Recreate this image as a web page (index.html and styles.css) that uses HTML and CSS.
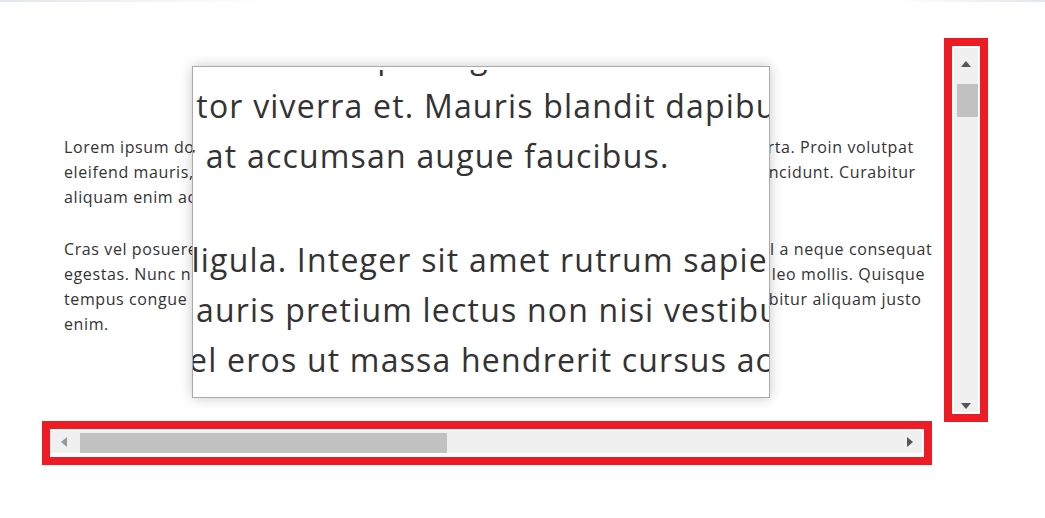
FILE: index.html
```html
<!DOCTYPE html>
<html lang="en">
<head>
    <meta charset="UTF-8">
    <title>Magnifier with custom scrollbars</title>
    <link rel="stylesheet" href="styles.css">
</head>
<body>
    <div class="topline"></div>

    <div class="page">
        <div class="row">
            <div class="text-pane">
                <div class="text">
                    <p>Lorem ipsum dolor sit amet, consectetuer adipiscing elit. Nunc vel metus at mollis et porta. Proin volutpat eleifend mauris, finibus non porttitor viverra et. Mauris blandit dapibus, a lacinia nibh tincidunt. Curabitur aliquam enim ac et lorem pulvinar at accumsan augue faucibus.</p>
                    <p>Cras vel posuere dui, a commodo ligula. Integer sit amet rutrum sapien. Fusce eu nisl vel a neque consequat egestas. Nunc nec ultrices nibh, mauris pretium lectus non nisi vestibulum, eget laoreet leo mollis. Quisque tempus congue erat, sed finibus vel eros ut massa hendrerit cursus accumsan nisl. Curabitur aliquam justo enim.</p>
                </div>
            </div>

            <!-- vertical scrollbar -->
            <div class="vscroll">
                <div class="track">
                    <span class="arrow up"></span>
                    <span class="thumb"></span>
                    <span class="arrow down"></span>
                </div>
            </div>
        </div>

        <!-- horizontal scrollbar -->
        <div class="hscroll">
            <div class="track">
                <span class="arrow left"></span>
                <span class="thumb"></span>
                <span class="arrow right"></span>
            </div>
        </div>
    </div>

    <!-- magnifier lens: same text, scaled 2x -->
    <div class="magnifier">
        <div class="text magnified">
            <p>Lorem ipsum dolor sit amet, consectetuer adipiscing elit. Nunc vel metus at mollis et porta. Proin volutpat eleifend mauris, finibus non porttitor viverra et. Mauris blandit dapibus, a lacinia nibh tincidunt. Curabitur aliquam enim ac et lorem pulvinar at accumsan augue faucibus.</p>
            <p>Cras vel posuere dui, a commodo ligula. Integer sit amet rutrum sapien. Fusce eu nisl vel a neque consequat egestas. Nunc nec ultrices nibh, mauris pretium lectus non nisi vestibulum, eget laoreet leo mollis. Quisque tempus congue erat, sed finibus vel eros ut massa hendrerit cursus accumsan nisl. Curabitur aliquam justo enim.</p>
        </div>
    </div>
</body>
</html>
```

FILE: styles.css
```css
body {
    margin: 0;
    background: #fff;
    font-family: "Open Sans", "Liberation Sans", sans-serif;
    color: #333;
}
.topline {
    height: 2px;
    background:
        linear-gradient(to right, #e1e6ec, rgba(225,230,236,0) 270px),
        linear-gradient(to left, #e1e6ec, rgba(225,230,236,0) 150px);
}
.page {
    padding: 36px 0 0 42px;
}
.row {
    display: flex;
    gap: 12px;
    height: 384px;
}
.text-pane {
    width: 890px;
    padding: 97px 0 0 22px;
    box-sizing: border-box;
}
.text {
    width: 880px;
    font-size: 16px;
    line-height: 25px;
    letter-spacing: 0.6px;
}
.text p {
    margin: 0 0 27px;
}

/* scrollbars */
.vscroll,
.hscroll {
    border: 8px solid #ed1c24;
    background: #fff;
    box-sizing: border-box;
}
.vscroll {
    width: 44px;
    padding: 2px;
}
.hscroll {
    width: 890px;
    height: 44px;
    margin-top: -1px;
    padding: 2px 2px 4px 0;
}
.track {
    background: #f0f0f0;
    height: 100%;
    display: flex;
}
.vscroll .track {
    flex-direction: column;
    align-items: center;
}
.hscroll .track {
    align-items: center;
}
.arrow {
    width: 0;
    height: 0;
    border-style: solid;
}
.arrow.up {
    margin-top: 13px;
    border-width: 0 5px 6px;
    border-color: transparent transparent #555;
}
.arrow.down {
    margin-top: auto;
    margin-bottom: 3px;
    border-width: 6px 5px 0;
    border-color: #555 transparent transparent;
}
.arrow.left {
    margin-left: 11px;
    border-width: 5px 6px 5px 0;
    border-color: transparent #999 transparent transparent;
}
.arrow.right {
    margin-left: auto;
    margin-right: 9px;
    border-width: 5px 0 5px 6px;
    border-color: transparent transparent transparent #555;
}
.thumb {
    background: #c1c1c1;
}
.vscroll .thumb {
    align-self: flex-end;
    width: 21px;
    height: 33px;
    margin-top: 17px;
}
.hscroll .thumb {
    align-self: flex-end;
    width: 367px;
    height: 20px;
    margin-left: 13px;
}

/* lens */
.magnifier {
    position: absolute;
    left: 192px;
    top: 66px;
    width: 578px;
    height: 332px;
    box-sizing: border-box;
    border: 1px solid #aaa;
    background: #fff;
    overflow: hidden;
    box-shadow: 0 0 12px rgba(0,0,0,0.22);
}
.magnifier::before {
    content: "";
    position: absolute;
    left: 0;
    right: 0;
    top: 0;
    height: 3px;
    background: #fff;
    z-index: 1;
}
.magnified {
    position: absolute;
    left: 0;
    top: 0;
    transform-origin: 0 0;
    transform: translate(-546px, -35px) scale(2);
}
```
